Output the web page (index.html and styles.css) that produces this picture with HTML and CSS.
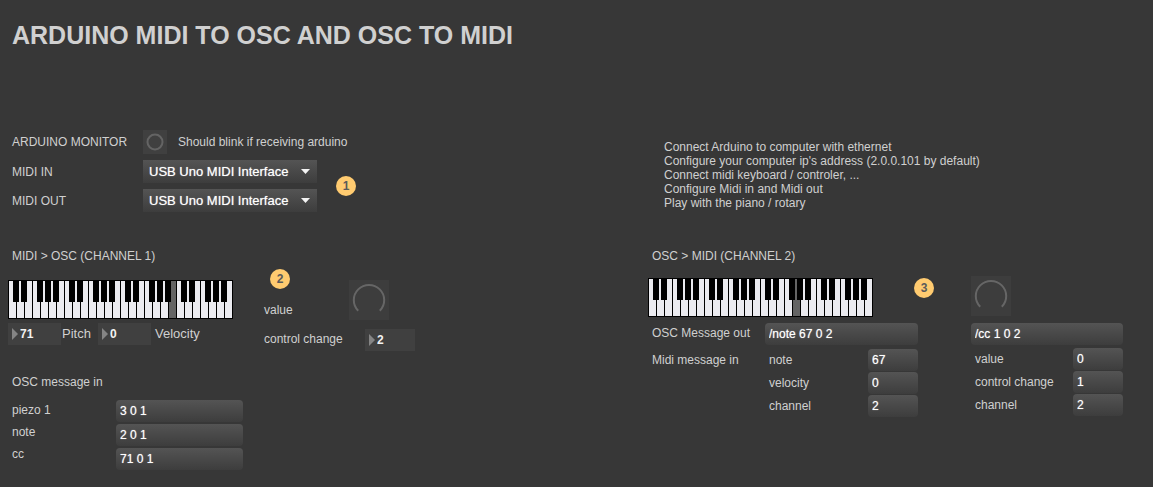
FILE: index.html
```html
<!DOCTYPE html>
<html lang="en">
<head>
<meta charset="utf-8">
<title>Arduino MIDI to OSC</title>
<meta name="viewport" content="width=device-width, initial-scale=1">
<link rel="stylesheet" href="styles.css">
</head>
<body>
<svg class="defs" aria-hidden="true">
  <defs>
    <!-- White keys repeat every 8px, black keys once per 56px octave -->
    <pattern id="white-keys" width="8" height="39" patternUnits="userSpaceOnUse">
      <rect x="1" y="1" width="7" height="37" fill="#ebebf0"/>
    </pattern>
    <pattern id="black-keys" width="56" height="39" patternUnits="userSpaceOnUse">
      <path d="M5 0h6v22h-6zM13 0h6v22h-6zM29 0h6v22h-6zM37 0h6v22h-6zM45 0h6v22h-6z" fill="#000"/>
    </pattern>
  </defs>
</svg>

<header class="title-bar">
  <h1>ARDUINO MIDI TO OSC AND OSC TO MIDI</h1>
</header>

<main class="patch">
  <div class="panel">
    <section class="config">
      <label for="monitor">ARDUINO MONITOR</label>
      <div class="monitor">
        <button class="bang" id="monitor" type="button" aria-label="Arduino monitor">
          <svg width="24" height="24" viewBox="0 0 24 24"><circle cx="12" cy="12" r="7.5" fill="none" stroke="#646464" stroke-width="2"/></svg>
        </button>
        <span>Should blink if receiving arduino</span>
      </div>
      <label for="midi-in">MIDI IN</label>
      <div class="menu">
        <select id="midi-in"><option>USB Uno MIDI Interface</option></select>
        <svg class="arrow" width="9" height="5" viewBox="0 0 9 5"><path d="M0 0h9L4.500 5z" fill="#f4f4f4"/></svg>
      </div>
      <span class="badge config-badge">1</span>
      <label for="midi-out">MIDI OUT</label>
      <div class="menu">
        <select id="midi-out"><option>USB Uno MIDI Interface</option></select>
        <svg class="arrow" width="9" height="5" viewBox="0 0 9 5"><path d="M0 0h9L4.500 5z" fill="#f4f4f4"/></svg>
      </div>
    </section>

    <section class="sender">
      <div class="notes">
        <h2>MIDI &gt; OSC (CHANNEL 1)</h2>
        <svg class="keyboard" width="225" height="39" viewBox="0 0 225 39" role="img" aria-label="Keyboard, note 71">
          <rect width="225" height="39" fill="#000"/>
          <rect width="224" height="39" fill="url(#white-keys)"/>
          <rect x="161" y="1" width="7" height="37" fill="#646464"/>
          <rect width="224" height="39" fill="url(#black-keys)"/>
        </svg>
        <div class="note-values">
          <span class="numbox">
            <svg width="6" height="12" viewBox="0 0 6 12"><path d="M0 0L6 6L0 12z" fill="#858585"/></svg>
            <input id="pitch" type="text" value="71">
          </span>
          <label for="pitch">Pitch</label>
          <span class="numbox">
            <svg width="6" height="12" viewBox="0 0 6 12"><path d="M0 0L6 6L0 12z" fill="#858585"/></svg>
            <input id="velocity" type="text" value="0">
          </span>
          <label for="velocity">Velocity</label>
        </div>
      </div>
      <div class="control">
        <div class="control-top">
          <div class="control-label">
            <span class="badge">2</span>
            <label for="dial-1">value</label>
          </div>
          <div class="dial">
            <svg width="40" height="40" viewBox="0 0 40 40"><path d="M9.200 30.800A15.200 15.200 0 1 1 30.800 30.800" fill="none" stroke="#666" stroke-width="2"/></svg>
            <input id="dial-1" type="range" min="0" max="127" value="0">
          </div>
        </div>
        <div class="control-row">
          <label for="cc-number">control change</label>
          <span class="numbox">
            <svg width="6" height="12" viewBox="0 0 6 12"><path d="M0 0L6 6L0 12z" fill="#858585"/></svg>
            <input id="cc-number" type="text" value="2">
          </span>
        </div>
      </div>
    </section>

    <section class="incoming">
      <h3>OSC message in</h3>
      <div class="incoming-body">
        <div class="incoming-labels">
          <label for="piezo">piezo 1</label>
          <label for="note">note</label>
          <label for="cc">cc</label>
        </div>
        <div class="incoming-fields">
          <input class="message" id="piezo" type="text" value="3 0 1">
          <input class="message" id="note" type="text" value="2 0 1">
          <input class="message" id="cc" type="text" value="71 0 1">
        </div>
      </div>
    </section>
  </div>

  <div class="panel">
    <p class="help">Connect Arduino to computer with ethernet<br>Configure your computer ip's address (2.0.0.101 by default)<br>Connect midi keyboard / controler, ...<br>Configure Midi in and Midi out<br>Play with the piano / rotary</p>

    <section class="receiver">
      <div class="receiver-top">
        <div class="receiver-notes">
          <h2>OSC &gt; MIDI (CHANNEL 2)</h2>
          <svg class="keyboard" width="225" height="39" viewBox="0 0 225 39" role="img" aria-label="Keyboard, note 67">
            <rect width="225" height="39" fill="#000"/>
            <rect width="224" height="39" fill="url(#white-keys)"/>
            <rect x="145" y="1" width="7" height="37" fill="#646464"/>
            <rect width="224" height="39" fill="url(#black-keys)"/>
          </svg>
        </div>
        <span class="badge receiver-badge">3</span>
        <div class="dial receiver-dial">
          <svg width="40" height="40" viewBox="0 0 40 40"><path d="M9.200 30.800A15.200 15.200 0 1 1 30.800 30.800" fill="none" stroke="#666" stroke-width="2"/></svg>
          <input type="range" min="0" max="127" value="0" aria-label="Control value">
        </div>
      </div>
      <div class="receiver-body">
        <div class="note-out">
          <label class="indent out-label" for="osc-out">OSC Message out</label>
          <input class="message wide" id="osc-out" type="text" value="/note 67 0 2">
          <span class="indent">Midi message in</span>
          <label class="indent" for="in-note">note</label>
          <input class="message" id="in-note" type="text" value="67">
          <label class="indent second" for="in-velocity">velocity</label>
          <input class="message" id="in-velocity" type="text" value="0">
          <label class="indent second" for="in-channel">channel</label>
          <input class="message" id="in-channel" type="text" value="2">
        </div>
        <div class="cc-out">
          <input class="message full" type="text" value="/cc 1 0 2" aria-label="Control change message out">
          <label class="indent" for="cc-value">value</label>
          <input class="message" id="cc-value" type="text" value="0">
          <label class="indent" for="cc-control">control change</label>
          <input class="message" id="cc-control" type="text" value="1">
          <label class="indent" for="cc-channel">channel</label>
          <input class="message" id="cc-channel" type="text" value="2">
        </div>
      </div>
    </section>
  </div>
</main>
</body>
</html>
```
FILE: styles.css
```css
* {
  box-sizing: border-box;
}

body {
  margin: 0;
  padding: 20px 30px 16px 8px;
  background: #373737;
  color: #d0d0d0;
  font: 12px/16px "Liberation Sans", Arial, sans-serif;
}

h1,
h2,
h3,
p {
  margin: 0;
  font-size: 12px;
  font-weight: 400;
}

svg {
  display: block;
  flex: none;
}

input,
select,
button {
  margin: 0;
  border: 0;
  font: inherit;
  color: inherit;
}

.defs {
  position: absolute;
  width: 0;
  height: 0;
}

.title-bar {
  margin-bottom: 80px;
  padding-left: 4px;
}

.title-bar h1 {
  font-size: 25px;
  line-height: 30px;
  font-weight: 700;
}

.patch {
  display: grid;
  grid-template-columns: minmax(0, 1fr) 475px;
}

.badge {
  display: block;
  width: 20px;
  border-radius: 50%;
  background: #ffcb70;
  color: #5a5a5a;
  font-weight: 700;
  line-height: 20px;
  text-align: center;
}

/* Device settings */

.config {
  display: grid;
  grid-template-columns: 131px 174px auto;
  justify-content: start;
  align-items: center;
  row-gap: 6px;
  padding-left: 4px;
  line-height: 18px;
}

.monitor {
  grid-column: 2 / -1;
  display: flex;
  align-items: center;
  gap: 11px;
}

.bang {
  padding: 0;
  background: #404040;
}

.menu {
  position: relative;
}

.menu select {
  display: block;
  width: 100%;
  height: 23px;
  padding: 0 6px;
  border-radius: 0;
  appearance: none;
  background: linear-gradient(#545454, #3d3d3d);
  color: #fff;
  font-size: 13px;
  text-shadow: 0 0 1px #fffa;
}

.arrow {
  position: absolute;
  top: 9px;
  right: 7px;
  pointer-events: none;
}

.config-badge {
  grid-area: 2 / 3 / 4 / 4;
  margin-left: 19px;
}

/* Keyboard and controller that send OSC */

.sender {
  display: flex;
  gap: 31px;
  margin-top: 35px;
}

h2 {
  padding-left: 4px;
  line-height: 18px;
}

.notes .keyboard {
  margin-top: 15px;
}

.note-values {
  display: flex;
  align-items: center;
  margin-top: 4px;
  font-size: 13px;
}

.note-values .numbox {
  width: 53px;
}

.note-values label {
  width: 37px;
  padding-left: 1px;
}

.note-values label:last-child {
  width: auto;
  padding-left: 4px;
}

.numbox {
  display: flex;
  align-items: center;
  gap: 2px;
  width: 50px;
  height: 22px;
  padding-left: 4px;
  background: #404040;
}

.numbox input {
  min-width: 0;
  width: 100%;
  padding: 0;
  background: none;
  color: #f2f2f2;
  font-size: 12px;
  font-weight: 700;
}

.control {
  padding-top: 22px;
}

.control-top {
  display: flex;
  align-items: flex-end;
}

.control-label {
  width: 85px;
  padding-bottom: 2px;
}

.control-label .badge {
  margin: 0 0 13px 6px;
}

.control-label label {
  display: block;
}

.dial {
  position: relative;
  width: 40px;
  height: 40px;
  background: #3d3d3d;
}

.dial input {
  position: absolute;
  inset: 0;
  width: 100%;
  height: 100%;
  opacity: 0;
}

.control-row {
  display: flex;
  margin-top: 9px;
  line-height: 20px;
}

.control-row label {
  width: 101px;
}

/* Message boxes */

.message {
  display: block;
  width: 100%;
  min-width: 0;
  height: 22px;
  padding: 0 4px;
  border-radius: 4px;
  background: linear-gradient(#545454, #3d3d3d);
  color: #fff;
  text-shadow: 0 0 1px #fffa;
}

.incoming {
  margin-top: 23px;
  padding-left: 4px;
}

.incoming-body {
  display: flex;
  margin-top: 9px;
}

.incoming-labels {
  display: grid;
  grid-auto-rows: 22px;
  width: 104px;
  line-height: 22px;
}

.incoming-fields {
  display: grid;
  gap: 2px;
  width: 127px;
  padding-top: 1px;
}

/* OSC input side */

.help {
  padding: 10px 0 0 16px;
  line-height: 14px;
}

.receiver {
  margin-top: 37px;
}

.receiver-top {
  display: flex;
  align-items: flex-end;
}

.receiver-notes .keyboard {
  margin-top: 13px;
}

.receiver-badge {
  margin: 0 37px 19px 41px;
}

.receiver-dial {
  margin-bottom: 1px;
}

.receiver-body {
  display: flex;
  align-items: flex-start;
  gap: 53px;
  margin-top: 6px;
}

.note-out,
.cc-out {
  display: grid;
  align-items: center;
  row-gap: 1px;
}

.note-out {
  grid-template-columns: 117px 103px 50px;
}

.cc-out {
  flex: 1;
  grid-template-columns: 1fr 50px;
}

.indent {
  padding-left: 4px;
}

.out-label {
  margin-bottom: 5px;
}

.wide {
  grid-column: 2 / -1;
  margin-bottom: 3px;
}

.second {
  grid-column: 2;
}

.full {
  grid-column: 1 / -1;
  margin-bottom: 2px;
}
```
